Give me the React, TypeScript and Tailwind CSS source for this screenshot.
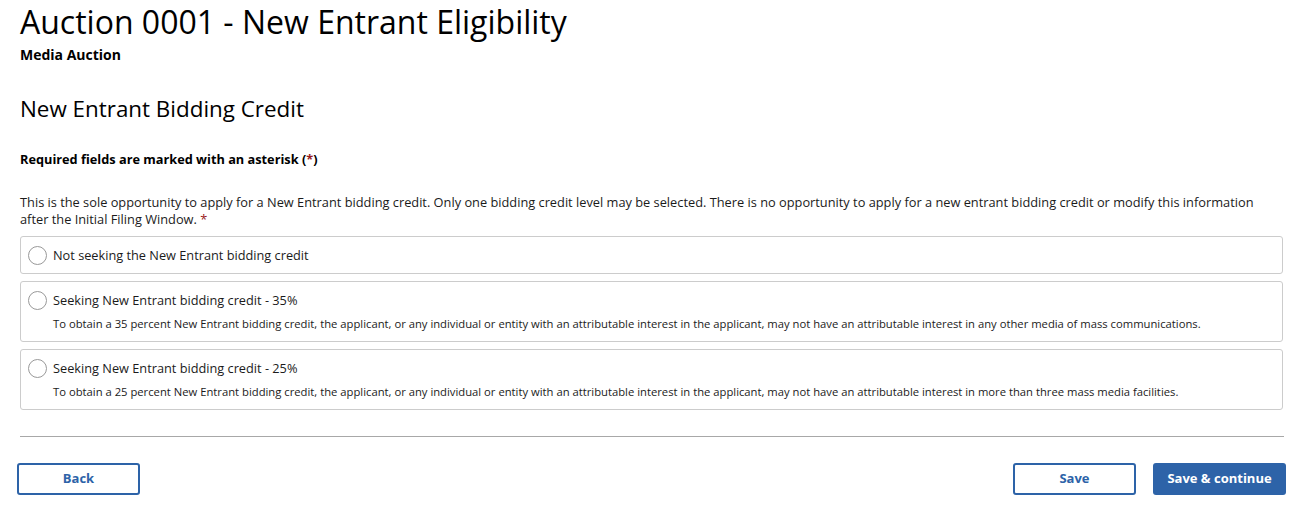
import React, { useState } from 'react'

const options = [
  { id: 'none', label: 'Not seeking the New Entrant bidding credit', desc: '' },
  {
    id: '35',
    label: 'Seeking New Entrant bidding credit - 35%',
    desc: 'To obtain a 35 percent New Entrant bidding credit, the applicant, or any individual or entity with an attributable interest in the applicant, may not have an attributable interest in any other media of mass communications.',
  },
  {
    id: '25',
    label: 'Seeking New Entrant bidding credit - 25%',
    desc: 'To obtain a 25 percent New Entrant bidding credit, the applicant, or any individual or entity with an attributable interest in the applicant, may not have an attributable interest in more than three mass media facilities.',
  },
]

function RadioCard({ label, desc, checked, onSelect }: { label: string; desc: string; checked: boolean; onSelect: () => void }) {
  return (
    <label
      onClick={onSelect}
      className={`block border border-[#cccccc] rounded-[3px] px-[7px] cursor-pointer ${desc ? 'pt-[8px] pb-[9px]' : 'py-[8px]'}`}
    >
      <div className="flex items-center gap-[6px]">
        <span className="w-[19px] h-[19px] rounded-full border border-[#999999] bg-white flex items-center justify-center shrink-0">
          {checked && <span className="w-[9px] h-[9px] rounded-full bg-[#2d63a8]" />}
        </span>
        <span className="text-[12.75px] leading-[20px] text-[#1b1b1b]">{label}</span>
      </div>
      {desc && <p className="ml-[25px] mt-[6px] text-[11.25px] leading-[16px] text-[#1b1b1b]">{desc}</p>}
    </label>
  )
}

export default function App() {
  const [sel, setSel] = useState('')

  return (
    <div className="bg-white min-h-screen px-[20px] pt-[1px] font-['Open_Sans','Noto_Sans',sans-serif] text-[#1b1b1b]">
      <h1 className="text-[32px] leading-[42px] font-normal text-black">Auction 0001 - New Entrant Eligibility</h1>
      <p className="mt-[3px] text-[14px] leading-[18px] font-bold text-black">Media Auction</p>

      <h2 className="mt-[30px] text-[22.4px] leading-[30px] font-normal text-black">New Entrant Bidding Credit</h2>

      <p className="mt-[26px] text-[12.75px] leading-[18px] font-bold text-black">
        Required fields are marked with an asterisk (<span className="text-[#981b1e]">*</span>)
      </p>

      <p className="mt-[26px] text-[12.8px] leading-[17px] text-[#1b1b1b]">
        This is the sole opportunity to apply for a New Entrant bidding credit. Only one bidding credit level may be selected. There is no opportunity to apply for a new entrant bidding credit or modify this information after the Initial Filing Window. <span className="text-[#981b1e]">*</span>
      </p>

      <div className="mt-[8px] flex flex-col gap-[7px]">
        {options.map(o => (
          <RadioCard key={o.id} label={o.label} desc={o.desc} checked={sel === o.id} onSelect={() => setSel(o.id)} />
        ))}
      </div>

      <div className="mt-[26px] border-t border-[#a8a8a8] mr-[-1px]" />

      <div className="mt-[26px] flex items-center justify-between mx-[-3px]">
        <button className="w-[123px] h-[32px] border-2 border-[#2d63a8] rounded-[3px] bg-white text-[#2d63a8] text-[13px] font-bold">
          Back
        </button>
        <div className="flex gap-[17px]">
          <button className="w-[123px] h-[32px] border-2 border-[#2d63a8] rounded-[3px] bg-white text-[#2d63a8] text-[13px] font-bold">
            Save
          </button>
          <button className="w-[133px] h-[32px] rounded-[3px] bg-[#2d63a8] text-white text-[13px] font-bold">
            Save &amp; continue
          </button>
        </div>
      </div>
    </div>
  )
}
